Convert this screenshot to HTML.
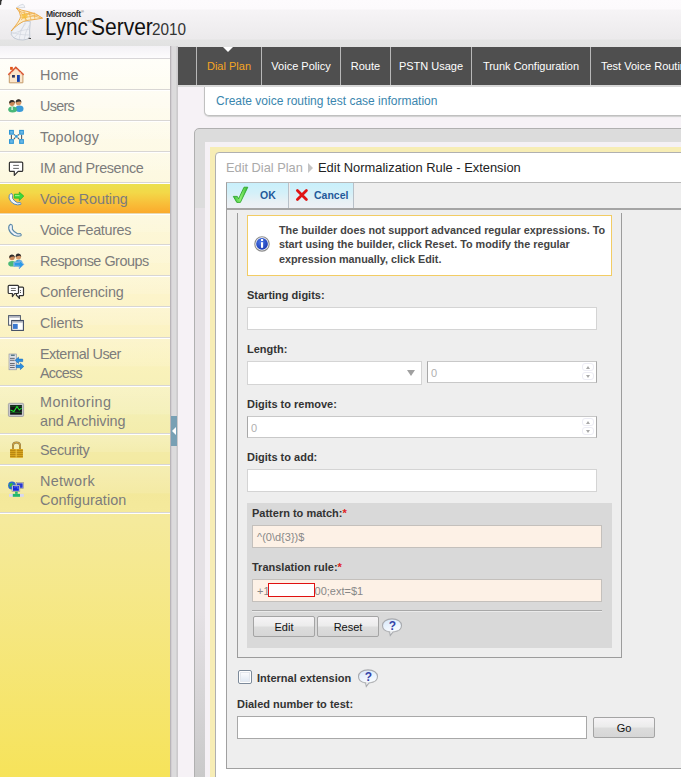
<!DOCTYPE html>
<html><head><meta charset="utf-8">
<style>
*{box-sizing:border-box}
html,body{margin:0;padding:0;width:681px;height:777px;overflow:hidden;background:#f6f2f6;font-family:"Liberation Sans",sans-serif}
.a{position:absolute}
#hdr{left:0;top:0;width:681px;height:47px;background:linear-gradient(#fdfbfd 0,#fcfafc 9px,#f6f4f6 10px,#eceaec 39px,#e4e4e4 40px,#e2e2e2 47px)}
#side{left:0;top:46px;width:170px;height:731px;background:linear-gradient(#fffffa 0,#fefcf0 54px,#fdf8dc 154px,#fcf3c6 274px,#faf2bc 314px,#f4efb4 364px,#f3eba6 404px,#f3e89a 444px,#f5ea9c 474px,#f6e35a 731px)}
.it{position:absolute;left:0;width:170px;border-bottom:1px solid #d8d6d4;box-shadow:0 1px 0 #fff;background:linear-gradient(rgba(255,255,255,0.2) 0,rgba(255,255,255,0.1) 60%,rgba(255,255,255,0) 61%)}
#side{}
.it span{position:absolute;left:40px;font-size:14.4px;color:#7c7c7c;line-height:19px;white-space:nowrap}
.ic{position:absolute;left:8px;width:17px;height:17px}
#split{left:170px;top:46px;width:8px;height:731px;background:linear-gradient(90deg,#aaa6aa 0,#c8c4c8 1px,#dcdadc 2px,#dcdcdc 6px,#c8c6c8 7px,#d0ced0 8px)}
#tabs{left:178px;top:47px;width:503px;height:40px;background:#4f4f4f;border-bottom:2px solid #d8d8d8}
.tab{position:absolute;top:0;height:38px;border-left:1px solid #b8b8b8;color:#fff;font-size:11px;line-height:38px;text-align:center}
.lbl{position:absolute;font-weight:bold;font-size:11px;color:#333;white-space:nowrap}
.inp{position:absolute;background:#fff;border:1px solid #d4d4d4}
.btn{position:absolute;border:1px solid #a4a4a4;border-radius:2px;background:linear-gradient(#f6f4f6 0,#ececec 45%,#dcdcdc 55%,#d6d6d6 100%);font-size:11px;color:#111;text-align:center;line-height:20px}
</style></head><body>
<!-- header -->
<div id="hdr" class="a">
  <svg class="a" style="left:8px;top:2px" width="38" height="40" viewBox="0 0 38 40">
    <path d="M8.4 5.8 Q12 2.5 15 2.2 Q16.5 3.5 16.8 5.6 Q12 5.6 8.4 5.8Z" fill="#f2f4f8" stroke="#c8ced8" stroke-width="0.7"/>
    <path d="M3.3 29 Q2 33 6 36 Q10 38.2 15 38 Q19 37.6 21.8 36 Q21.2 28 22.3 19.5 L15.5 19 Q8 23 3.3 29Z" fill="#eff1f5" stroke="#b8c0cc" stroke-width="0.8"/>
    <path d="M4 32 Q12 28 22 27 M6 36 Q12 30 18 21 M11 37.5 Q12 29 17 20.5 M16 38 Q17 30 21.5 23 M3.5 30 Q10 33 21.5 33" fill="none" stroke="#ccd2dc" stroke-width="0.6"/>
    <path d="M8.4 6 Q13 8.5 20 9.6 Q29 11.5 34.6 16.2 Q27 17.6 20 18.3 Q15 18.8 11 22 Q6 25.5 3.3 29 C6.5 24.5 11.5 19.5 12.6 14.5 Q12.3 9.5 8.4 6Z" fill="#fbecc8" stroke="#eca53c" stroke-width="0.9" stroke-linejoin="round"/>
    <path d="M10.5 9 L33 16 M12.5 13 L27 11 M12.6 16 L30 13.5 M16 9 L17.5 18.6 M21 10 L23 18 M26 11.3 L27 17.5 M11 8 L19 18.5 M13 18 L22 10" fill="none" stroke="#efad48" stroke-width="0.7"/>
    <ellipse cx="16.5" cy="14" rx="3.2" ry="2.6" fill="#f6c038" opacity="0.7"/>
    <path d="M20.5 36.2 L23 36.6" stroke="#333" stroke-width="0.9"/>
  </svg>
  <div class="a" style="left:46px;top:10px;font-size:8.6px;font-weight:bold;color:#333;letter-spacing:-0.45px;line-height:9px">Microsoft</div>
  <div class="a" style="left:81px;top:10px;font-size:4px;color:#555;line-height:4px">&reg;</div>
  <div class="a" id="lync" style="left:45px;top:14px;font-size:24px;line-height:26px;color:#111;white-space:nowrap;transform:scaleX(0.86);transform-origin:0 0">Lync</div>
  <div class="a" style="left:87px;top:20px;font-size:4px;color:#666;line-height:4px">TM</div>
  <div class="a" id="server" style="left:91px;top:14px;font-size:24px;line-height:26px;color:#111;white-space:nowrap;transform:scaleX(0.875);transform-origin:0 0">Server</div>
  <div class="a" id="y2010" style="left:152px;top:20px;font-size:17px;line-height:20px;color:#333;white-space:nowrap;transform:scaleX(0.9);transform-origin:0 0">2010</div>
</div>
</div>

<svg class="a" style="left:0;top:0" width="4" height="6" viewBox="0 0 4 6"><path d="M0 0 H2.2 L1.4 1.6 L1.2 4.6 L0 5.2Z" fill="#111" opacity="0.85"/></svg>
<!-- sidebar -->
<div id="side" class="a">
  <div class="a" style="left:0;top:0;width:170px;height:13px;background:linear-gradient(#f3f1f5,#fdfcfd);border-bottom:1px solid #d8d6d8"></div>
</div>
<div class="it" style="top:59px;height:31px;"><span style="top:7px"><i style="font-style:normal;letter-spacing:0.07px">Home</i></span></div>
<div class="it" style="top:90px;height:31px;"><span style="top:7px"><i style="font-style:normal;letter-spacing:-0.7px">Users</i></span></div>
<div class="it" style="top:121px;height:31px;"><span style="top:7px"><i style="font-style:normal;letter-spacing:0.19px">Topology</i></span></div>
<div class="it" style="top:152px;height:31px;"><span style="top:7px"><i style="font-style:normal;letter-spacing:-0.36px">IM and Presence</i></span></div>
<div class="it" style="top:184px;height:30px;background:linear-gradient(#ebe04e 0,#f3d848 30%,#f8c03a 65%,#fbaa2c 100%);border-bottom-color:#e8d8b0;"><span style="top:6px"><i style="font-style:normal;letter-spacing:-0.08px">Voice Routing</i></span></div>
<div class="it" style="top:214px;height:31px;"><span style="top:7px"><i style="font-style:normal;letter-spacing:-0.35px">Voice Features</i></span></div>
<div class="it" style="top:245px;height:31px;"><span style="top:7px"><i style="font-style:normal;letter-spacing:-0.49px">Response Groups</i></span></div>
<div class="it" style="top:276px;height:31px;"><span style="top:7px"><i style="font-style:normal;letter-spacing:-0.17px">Conferencing</i></span></div>
<div class="it" style="top:307px;height:31px;"><span style="top:7px"><i style="font-style:normal;letter-spacing:-0.13px">Clients</i></span></div>
<div class="it" style="top:338px;height:48px;"><span style="top:7px"><i style="font-style:normal;letter-spacing:-0.48px">External User</i><br><i style="font-style:normal;letter-spacing:-0.76px">Access</i></span></div>
<div class="it" style="top:386px;height:48px;"><span style="top:7px"><i style="font-style:normal;letter-spacing:0.43px">Monitoring</i><br><i style="font-style:normal;letter-spacing:-0.07px">and Archiving</i></span></div>
<div class="it" style="top:434px;height:31px;"><span style="top:7px"><i style="font-style:normal;letter-spacing:-0.33px">Security</i></span></div>
<div class="it" style="top:465px;height:48px;"><span style="top:7px"><i style="font-style:normal;letter-spacing:0.32px">Network</i><br><i style="font-style:normal;letter-spacing:0.05px">Configuration</i></span></div>
<svg class="a" style="left:4px;top:62px" width="26" height="26" viewBox="0 0 26 26"><path d="M5.3 20.8 V12.6 L11.8 6 L18.9 12.6 V20.8Z" fill="#fbe6cc" stroke="#c49a68" stroke-width="1"/>
<path d="M4.4 12.8 L11.8 5.4 L19.6 12.8" fill="none" stroke="#d8502a" stroke-width="1.7"/>
<path d="M5.6 12.2 L11.8 6.6 L18.4 12.2" fill="none" stroke="#fff" stroke-width="0.6" stroke-dasharray="1 1"/>
<rect x="6.1" y="4.9" width="2.7" height="2.9" fill="#e05414"/>
<rect x="8" y="13" width="2.9" height="2.6" fill="#30385e"/>
<rect x="13" y="13" width="2.8" height="6.9" fill="#1242b0"/></svg>
<svg class="a" style="left:4px;top:93px" width="26" height="26" viewBox="0 0 26 26"><ellipse cx="15.5" cy="15.8" rx="4" ry="3.2" fill="#3a9ad8"/>
<circle cx="14.5" cy="9.4" r="2.8" fill="#d49868"/>
<path d="M11.6 9 Q12 6 14.5 6.2 Q17.4 6.3 17.4 9.5 L16.4 8.4 Q14 8.2 12 9.6Z" fill="#2e2e2e"/>
<ellipse cx="8.6" cy="16.6" rx="4.4" ry="3" fill="#4ab878"/>
<circle cx="8" cy="10.1" r="2.8" fill="#c88858"/>
<path d="M5.1 9.8 Q5.4 6.8 8 6.9 Q11 7 10.9 10.2 L9.9 9.1 Q7.5 8.9 5.5 10.4Z" fill="#2e2e2e"/>
<rect x="7.4" y="14" width="1.4" height="3" fill="#fff" opacity="0.8"/></svg>
<svg class="a" style="left:4px;top:124px" width="26" height="26" viewBox="0 0 26 26"><path d="M7.4 10.7 V15.1 M17.6 10.7 V15.1 M9.9 10.7 L11.1 11.1 M13.7 11.1 L15.1 10.7 M11.1 13.7 L9.9 15.1 M13.7 13.7 L15.1 15.1" stroke="#505a6a" stroke-width="1.1"/>
<rect x="5" y="5.9" width="4.9" height="4.8" fill="#2e96d6"/><rect x="15.1" y="5.9" width="4.8" height="4.8" fill="#2e96d6"/>
<rect x="5" y="15.1" width="4.9" height="4.8" fill="#2e96d6"/><rect x="15.1" y="15.1" width="4.8" height="4.8" fill="#2e96d6"/>
<rect x="11.1" y="11.1" width="2.6" height="2.6" fill="#2e96d6"/>
<rect x="6.2" y="7" width="2.6" height="2.6" fill="#6ab8e6"/><rect x="16.3" y="7" width="2.6" height="2.6" fill="#6ab8e6"/>
<rect x="6.2" y="16.2" width="2.6" height="2.6" fill="#6ab8e6"/><rect x="16.3" y="16.2" width="2.6" height="2.6" fill="#6ab8e6"/></svg>
<svg class="a" style="left:4px;top:155px" width="26" height="26" viewBox="0 0 26 26"><path d="M6.3 7.1 H17.8 Q18.7 7.1 18.7 8 V15.5 Q18.7 16.4 17.8 16.4 H14.1 L10.3 20.4 V16.4 H6.3 Q5.4 16.4 5.4 15.5 V8 Q5.4 7.1 6.3 7.1Z" fill="#fff" stroke="#333" stroke-width="1.2" stroke-linejoin="round"/>
<path d="M9.2 10.4 H14.9 M9.2 13.4 H14.9" stroke="#555" stroke-width="0.9"/></svg>
<svg class="a" style="left:4px;top:186px" width="26" height="26" viewBox="0 0 26 26"><path d="M7 7.4 Q4.6 8.6 5 12 Q6 16 10 18 Q14 19.6 16.8 18.4 Q17.6 17.4 16.2 16.6 L13.6 16.8 Q10.4 15.4 8.6 12.4 L8.6 9.4 Q8.8 8 7 7.4Z" fill="#f4f6fa" stroke="#5a88b0" stroke-width="1"/>
<path d="M10.3 8.2 H15.3 V6.1 L19.8 10.1 L15.3 14.5 V12.2 H10.3Z" fill="#3cd83c" stroke="#22b022" stroke-width="0.7"/>
<path d="M11 9.6 H15.5" stroke="#a0f890" stroke-width="1"/></svg>
<svg class="a" style="left:4px;top:217px" width="26" height="26" viewBox="0 0 26 26"><path d="M6.6 7.3 Q4.2 8.6 4.8 12 Q5.8 16 9.8 18.2 Q13.8 19.8 16.8 18.8 Q17.8 17.6 16.4 16.6 L13.6 16.8 Q10.2 15.4 8.4 12.4 L8.4 9.4 Q8.6 7.8 6.6 7.3Z" fill="#eef2f8" stroke="#5a88a8" stroke-width="1.1"/></svg>
<svg class="a" style="left:4px;top:248px" width="26" height="26" viewBox="0 0 26 26"><ellipse cx="14.8" cy="14.5" rx="3.6" ry="2.8" fill="#3a9ad8"/>
<circle cx="14.4" cy="8.8" r="2.7" fill="#d49868"/>
<path d="M11.6 8.4 Q12 5.4 14.4 5.6 Q17.2 5.8 17.2 8.9 L16.2 7.8 Q14 7.6 12 9Z" fill="#2e2e2e"/>
<ellipse cx="8.2" cy="15.8" rx="4" ry="2.8" fill="#4ab878"/>
<circle cx="8" cy="9.6" r="2.7" fill="#c88858"/>
<path d="M5.2 9.2 Q5.5 6.3 8 6.4 Q10.9 6.5 10.8 9.7 L9.8 8.6 Q7.5 8.4 5.6 9.9Z" fill="#2e2e2e"/>
<path d="M9.9 14.3 H15.3 V11.8 L19.8 16.4 L15.3 20.6 V18.3 H9.9Z" fill="#2a9ae8" stroke="#fff" stroke-width="0.9"/>
<path d="M9.9 14.3 H15.3 V11.8 L19.8 16.4 L15.3 20.6 V18.3 H9.9Z" fill="none" stroke="#1a74c8" stroke-width="0.6"/></svg>
<svg class="a" style="left:4px;top:279px" width="26" height="26" viewBox="0 0 26 26"><path d="M12.4 8.2 H18.6 Q19.5 8.2 19.5 9.1 V15.7 Q19.5 16.6 18.6 16.6 H15.3 L15.5 19.5 L13 16.6 H12.4Z" fill="#fff" stroke="#333" stroke-width="1.2" stroke-linejoin="round"/>
<path d="M5.1 6.3 H13.6 Q14.5 6.3 14.5 7.2 V13.6 Q14.5 14.5 13.6 14.5 H10.7 L8.4 17.6 V14.5 H5.1 Q4.2 14.5 4.2 13.6 V7.2 Q4.2 6.3 5.1 6.3Z" fill="#fff" stroke="#333" stroke-width="1.2" stroke-linejoin="round"/>
<path d="M6.9 9.4 H11.8 M6.9 11.5 H11.8" stroke="#555" stroke-width="0.9"/>
<rect x="16" y="11.1" width="1" height="1" fill="#555"/><rect x="16" y="13" width="1" height="1" fill="#555"/></svg>
<svg class="a" style="left:4px;top:310px" width="26" height="26" viewBox="0 0 26 26"><rect x="4.6" y="5.6" width="11.8" height="9.6" fill="#fff" stroke="#4a5468" stroke-width="1"/>
<rect x="5.1" y="6.1" width="10.8" height="1.6" fill="#a8acb8"/>
<rect x="7.7" y="10.5" width="11.7" height="9.9" fill="#fff" stroke="#3e4a62" stroke-width="1.1"/>
<rect x="8.2" y="11" width="10.7" height="1.6" fill="#a8acb8"/>
<rect x="9" y="13.9" width="4.7" height="5" fill="#3a78d0"/></svg>
<svg class="a" style="left:4px;top:349px" width="26" height="26" viewBox="0 0 26 26"><rect x="5" y="5" width="7.6" height="15.8" fill="#dcdee4" stroke="#8a8e98" stroke-width="0.6"/>
<rect x="6.9" y="5.7" width="3.8" height="1" fill="#205060"/>
<path d="M6 9.4 H10.7 M6 11.3 H10.7 M6 14.5 H10.7 M6 16.4 H10.7 M6 18.5 H10.7" stroke="#5a5e68" stroke-width="0.9"/>
<path d="M11.1 11.3 L14.5 8.2 V10.1 H18.7 V12.6 H14.5 V14.5Z" fill="#2a90e0" stroke="#1a6ac0" stroke-width="0.6"/>
<path d="M19.8 17.4 L16.4 14.3 V16 H12.2 V18.7 H16.4 V20.6Z" fill="#2a90e0" stroke="#1a6ac0" stroke-width="0.6"/></svg>
<svg class="a" style="left:4px;top:397px" width="26" height="26" viewBox="0 0 26 26"><rect x="4.4" y="6.3" width="15.2" height="13.2" rx="1.2" fill="#c8c8cc" stroke="#98989e" stroke-width="0.8"/>
<rect x="6.1" y="8" width="11.8" height="9.7" fill="#141418"/>
<path d="M6.1 9.2 H17.9 M6.1 15.3 H17.9" stroke="#1a8a2a" stroke-width="0.6"/>
<path d="M6.5 13 L9.9 14.5 L13 9.5 L15.3 13 L17.6 11.1" fill="none" stroke="#20e030" stroke-width="1.1"/></svg>
<svg class="a" style="left:4px;top:437px" width="26" height="26" viewBox="0 0 26 26"><path d="M9 12.4 V8.2 Q9 5.4 12.5 5.4 Q16 5.4 16 8.2 V12.4" fill="none" stroke="#8a7040" stroke-width="2"/>
<path d="M9 12.4 V8.2 Q9 5.4 12.5 5.4 Q16 5.4 16 8.2 V12.4" fill="none" stroke="#f0c040" stroke-width="0.8"/>
<rect x="6.1" y="12" width="12.8" height="8.8" fill="#dca820"/>
<path d="M6.1 13.4 H18.9 M6.1 15.4 H18.9 M6.1 17.4 H18.9 M6.1 19.4 H18.9" stroke="#b08010" stroke-width="0.9"/>
<rect x="11.5" y="12" width="1.6" height="8.8" fill="#f0cc50" opacity="0.6"/></svg>
<svg class="a" style="left:4px;top:476px" width="26" height="26" viewBox="0 0 26 26"><circle cx="8" cy="9.5" r="3.9" fill="#2a6ad0"/>
<path d="M5.2 8.4 Q7 6.6 9 7.6 Q8 10 6 11.2Z" fill="#30c030"/>
<rect x="12.2" y="6.5" width="7.3" height="6.1" fill="#e0e0e8" stroke="#8a8a80" stroke-width="0.6"/>
<rect x="13" y="7.3" width="5.7" height="4.5" fill="#2838d0"/>
<rect x="8" y="9.2" width="7.8" height="6.4" fill="#ececf0" stroke="#8a8a80" stroke-width="0.6"/>
<rect x="8.9" y="10" width="6" height="4.8" fill="#1a2ad8"/>
<path d="M10 11 L13.5 10.5 L14 13" fill="none" stroke="#6a7af0" stroke-width="0.8"/>
<rect x="11.1" y="15.6" width="2.6" height="2.3" fill="#22b86a"/>
<rect x="5" y="17.9" width="14.8" height="2.9" fill="#d8d8f0"/>
<rect x="8.8" y="17.9" width="7.2" height="2.9" fill="#22b86a"/></svg>

<!-- splitter -->
<div id="split" class="a"></div>
<div class="a" style="left:171px;top:416px;width:6px;height:30px;background:#78a0b4"></div>
<div class="a" style="left:171.5px;top:427px;width:0;height:0;border-top:4px solid transparent;border-bottom:4px solid transparent;border-right:4.5px solid #fff"></div>

<!-- tabs -->
<div id="tabs" class="a">
  <div class="tab" style="left:18px;width:65px;color:#f5a623">Dial Plan</div>
  <div class="a" style="left:45px;top:0;width:0;height:0;border-left:5px solid transparent;border-right:5px solid transparent;border-top:5px solid #fff"></div>
  <div class="tab" style="left:83px;width:79px">Voice Policy</div>
  <div class="tab" style="left:162px;width:50px">Route</div>
  <div class="tab" style="left:212px;width:81px">PSTN Usage</div>
  <div class="tab" style="left:293px;width:119px">Trunk Configuration</div>
  <div class="tab" style="left:412px;width:120px;text-align:left;padding-left:10px;white-space:nowrap">Test Voice Routing</div>
</div>

<!-- create box -->
<div class="a" style="left:204px;top:87px;width:490px;height:29px;background:#fff;border:1px solid #c0c0c0;border-top:none;border-radius:0 0 0 5px;box-shadow:0 1px 1px 0 #d0d0d0"></div>
<div class="a" style="left:216px;top:94px;font-size:12px;color:#3a86ae;white-space:nowrap">Create voice routing test case information</div>

<!-- outer panel -->
<div class="a" style="left:194px;top:128px;width:500px;height:660px;background:linear-gradient(#dcdcdc 0,#dcdcdc 79px,#e5e1e5 79px,#e5e1e5 480px,#c9c9c9 649px);border:1px solid #b0b0b0;border-radius:5px 0 0 0"></div>
<div class="a" style="left:205px;top:142px;width:480px;height:640px;background:#f5f1f5"></div>
<div class="a" style="left:210px;top:147px;width:480px;height:640px;background:#f7edb5"></div>
<div class="a" style="left:215px;top:152px;width:480px;height:640px;background:#fff;border:1px solid #b0b0b0;border-radius:4px 0 0 0"></div>

<!-- breadcrumb -->
<div class="a" style="left:226px;top:160px;font-size:12.8px;color:#aaa;white-space:nowrap">Edit Dial Plan</div>
<div class="a" style="left:308px;top:163px;width:0;height:0;border-top:5px solid transparent;border-bottom:5px solid transparent;border-left:5px solid #c4c4c4"></div>
<div class="a" style="left:318px;top:160px;font-size:12.9px;color:#222;white-space:nowrap">Edit Normalization Rule - Extension</div>

<!-- toolbar container -->
<div class="a" style="left:226px;top:182px;width:470px;height:587px;background:#eeeeee;border-left:1px solid #a0a0a0;border-bottom:1px solid #a0a0a0;border-top:1px solid #b8b8b8"></div>
<div class="a" style="left:227px;top:183px;width:62px;height:25px;background:linear-gradient(#c8f0fc 0,#d4f0f8 40%,#e8f0f4 75%,#eef0f5 100%);border-right:1px solid #b8c0c8"></div>
<div class="a" style="left:290px;top:183px;width:64px;height:25px;background:linear-gradient(#c8f0fc 0,#d4f0f8 40%,#e8f0f4 75%,#eef0f5 100%);border-right:1px solid #b8c0c8"></div>
<div class="a" style="left:227px;top:208px;width:460px;height:2px;background:#a4a4a4"></div>
<svg class="a" style="left:228px;top:183px" width="30" height="25" viewBox="0 0 30 25"><defs><linearGradient id="gck" x1="0" y1="0" x2="1" y2="0"><stop offset="0" stop-color="#3cc03c"/><stop offset="0.5" stop-color="#8af070"/><stop offset="1" stop-color="#34b834"/></linearGradient></defs><path d="M5.3 13.4 L9.3 13.4 L10.6 15.8 L16 4.2 L19.8 4.2 L12.4 19.4 L8.8 19.4 Z" fill="url(#gck)" stroke="#22a022" stroke-width="0.8" stroke-linejoin="round"/></svg>
<div class="a" style="left:260px;top:189px;font-size:10.5px;font-weight:bold;color:#1f5a9a">OK</div>
<svg class="a" style="left:290px;top:183px" width="24" height="25" viewBox="0 0 24 25"><path d="M7.4 7.4 L16.4 16.4 M16.4 7.4 L7.4 16.4" stroke="#e01414" stroke-width="2.8" stroke-linecap="round"/></svg>
<div class="a" style="left:314px;top:189px;font-size:10.5px;font-weight:bold;color:#1f5a9a">Cancel</div>

<!-- content box -->
<div class="a" style="left:237px;top:213px;width:385px;height:445px;border:1px solid #9c9c9c;border-top:none"></div>

<!-- info -->
<div class="a" style="left:247px;top:215px;width:365px;height:61px;background:#fff;border:1px solid #f2cc64"></div>
<svg class="a" style="left:250px;top:232px" width="24" height="24" viewBox="0 0 24 24"><defs><radialGradient id="gin" cx="0.4" cy="0.35" r="0.7"><stop offset="0" stop-color="#4a78e8"/><stop offset="1" stop-color="#1a38b0"/></radialGradient></defs><circle cx="12" cy="11.9" r="7.2" fill="#fff" stroke="#8c8c8c" stroke-width="1.1"/><circle cx="12" cy="11.9" r="5.9" fill="url(#gin)"/><rect x="11" y="7" width="2.1" height="2" fill="#fff"/><rect x="11" y="10.2" width="2.1" height="5.6" fill="#fff"/></svg>
<div class="a" style="left:279px;top:223px;width:335px;font-size:10.8px;font-weight:bold;color:#444;line-height:14.4px">The builder does not support advanced regular expressions. To start using the builder, click Reset. To modify the regular expression manually, click Edit.</div>

<!-- fields -->
<div class="lbl" style="left:247px;top:289px">Starting digits:</div>
<div class="inp" style="left:247px;top:307px;width:350px;height:23px"></div>
<div class="lbl" style="left:247px;top:343px">Length:</div>
<div class="inp" style="left:247px;top:361px;width:175px;height:24px"></div>
<div class="a" style="left:406.5px;top:370px;width:0;height:0;border-left:4.5px solid transparent;border-right:4.5px solid transparent;border-top:6px solid #a0a0a0"></div>
<div class="inp" style="left:427px;top:361px;width:170px;height:22px;border-color:#c8c8c8 #a8a8a8 #c8c8c8 #a8a8a8"></div>
<div class="a" style="left:431px;top:367px;font-size:11px;color:#b0b0b0">0</div>
<div class="a" style="left:582px;top:363px;width:12px;height:8px;border:1px solid #ececf4;border-radius:3px"></div>
<div class="a" style="left:586px;top:366px;width:0;height:0;border-left:2.5px solid transparent;border-right:2.5px solid transparent;border-bottom:3px solid #a8a8a8"></div>
<div class="a" style="left:582px;top:372px;width:12px;height:8px;border:1px solid #ececf4;border-radius:3px"></div>
<div class="a" style="left:586px;top:375px;width:0;height:0;border-left:2.5px solid transparent;border-right:2.5px solid transparent;border-top:3px solid #a8a8a8"></div>
<div class="lbl" style="left:247px;top:398px">Digits to remove:</div>
<div class="inp" style="left:247px;top:416px;width:350px;height:22px;border-color:#c8c8c8 #a8a8a8 #c8c8c8 #a8a8a8"></div>
<div class="a" style="left:251px;top:422px;font-size:11px;color:#b0b0b0">0</div>
<div class="a" style="left:582px;top:418px;width:12px;height:8px;border:1px solid #ececf4;border-radius:3px"></div>
<div class="a" style="left:586px;top:421px;width:0;height:0;border-left:2.5px solid transparent;border-right:2.5px solid transparent;border-bottom:3px solid #a8a8a8"></div>
<div class="a" style="left:582px;top:427px;width:12px;height:8px;border:1px solid #ececf4;border-radius:3px"></div>
<div class="a" style="left:586px;top:430px;width:0;height:0;border-left:2.5px solid transparent;border-right:2.5px solid transparent;border-top:3px solid #a8a8a8"></div>
<div class="lbl" style="left:247px;top:451px">Digits to add:</div>
<div class="inp" style="left:247px;top:469px;width:350px;height:23px"></div>

<!-- gray section -->
<div class="a" style="left:247px;top:503px;width:365px;height:145px;background:#d9d9d9"></div>
<div class="lbl" style="left:252px;top:507px">Pattern to match:<span style="color:#e02020">*</span></div>
<div class="inp" style="left:252px;top:525px;width:350px;height:23px;background:#fdf1e6;border-color:#c4c0bc"></div>
<div class="a" style="left:257px;top:531px;font-size:11px;color:#888">^(0\d{3})$</div>
<div class="lbl" style="left:252px;top:561px">Translation rule:<span style="color:#e02020">*</span></div>
<div class="inp" style="left:252px;top:579px;width:350px;height:23px;background:#fdf1e6;border-color:#c4c0bc"></div>
<div class="a" style="left:257px;top:585px;font-size:11px;color:#888">+1<span style="display:inline-block;width:45px"></span>00;ext=$1</div>
<div class="a" style="left:268px;top:583px;width:47px;height:14px;background:#fff;border:1.5px solid #e01010"></div>
<div class="a" style="left:252px;top:610px;width:350px;height:1px;background:#a8a8a8;box-shadow:0 1px 0 #eaeaea"></div>
<div class="btn" style="left:253px;top:616px;width:62px;height:21px">Edit</div>
<div class="btn" style="left:317px;top:616px;width:62px;height:21px">Reset</div>
<svg class="a" style="left:378px;top:614px" width="28" height="26" viewBox="0 0 28 26"><defs><linearGradient id="gq1" x1="0" y1="0" x2="0.3" y2="1"><stop offset="0" stop-color="#d4e6fa"/><stop offset="0.6" stop-color="#eef5fd"/><stop offset="1" stop-color="#fff"/></linearGradient></defs><path d="M14 4.9 C19.5 4.9 23.5 7.6 23.5 11.5 C23.5 15.2 20 17.6 15 18 L12.3 21.4 L11.6 17.9 C7.2 17.3 4.5 14.9 4.5 11.5 C4.5 7.6 8.5 4.9 14 4.9Z" fill="url(#gq1)" stroke="#a8aaae" stroke-width="1.1"/><path d="M8 17.5 Q14 19 21 16.5" fill="none" stroke="#c8c8c8" stroke-width="0.8" opacity="0.6"/><text x="14.3" y="15.8" font-family="Liberation Sans" font-weight="bold" font-size="12" fill="#3444a8" text-anchor="middle">?</text></svg>

<!-- bottom -->
<div class="a" style="left:238px;top:670px;width:14px;height:14px;background:#fff;border:1px solid #7c8a9a;border-radius:2px"></div><div class="a" style="left:240px;top:672px;width:10px;height:10px;background:linear-gradient(#fafbfd,#e2eaf4);border:1px solid #e4e8ee"></div>
<div class="lbl" style="left:257px;top:672px">Internal extension</div>
<svg class="a" style="left:354px;top:665px" width="28" height="26" viewBox="0 0 28 26"><defs><linearGradient id="gq2" x1="0" y1="0" x2="0.3" y2="1"><stop offset="0" stop-color="#d4e6fa"/><stop offset="0.6" stop-color="#eef5fd"/><stop offset="1" stop-color="#fff"/></linearGradient></defs><path d="M14 4.9 C19.5 4.9 23.5 7.6 23.5 11.5 C23.5 15.2 20 17.6 15 18 L12.3 21.4 L11.6 17.9 C7.2 17.3 4.5 14.9 4.5 11.5 C4.5 7.6 8.5 4.9 14 4.9Z" fill="url(#gq2)" stroke="#a8aaae" stroke-width="1.1"/><path d="M8 17.5 Q14 19 21 16.5" fill="none" stroke="#c8c8c8" stroke-width="0.8" opacity="0.6"/><text x="14.3" y="15.8" font-family="Liberation Sans" font-weight="bold" font-size="12" fill="#3444a8" text-anchor="middle">?</text></svg>
<div class="lbl" style="left:237px;top:698px">Dialed number to test:</div>
<div class="inp" style="left:237px;top:716px;width:350px;height:23px;border-color:#a8a8a8"></div>
<div class="btn" style="left:593px;top:717px;width:62px;height:21px;line-height:21px">Go</div>
</body></html>
